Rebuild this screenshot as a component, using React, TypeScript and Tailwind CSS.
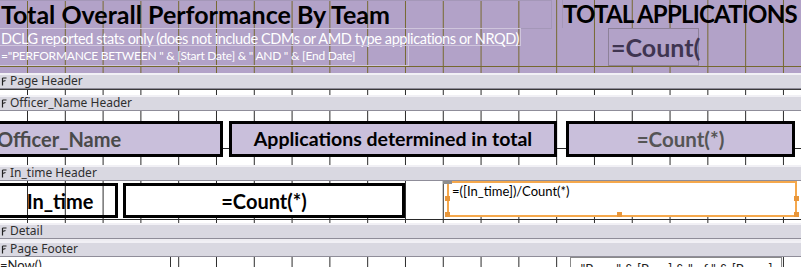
import type { ReactNode } from "react";

function BandIcon() {
  return (
    <svg width="6" height="9" viewBox="0 0 6 9" className="shrink-0">
      <path d="M1.5 1 H5.5 M1.5 1 V8.5 M1.5 4.5 L4.5 3.5" stroke="#222" strokeWidth="1.2" fill="none" />
    </svg>
  );
}

function Band({ label }: { label: string }) {
  return (
    <div className="flex h-4 shrink-0 items-center gap-[3px] border-t-2 border-b border-t-[#f1f0f5] border-b-[#8f8d99] bg-[#d9d8e1] pl-px font-['Noto_Sans',sans-serif] text-[12px] leading-none text-[#2f2f2f]">
      <BandIcon />
      <span className="-mt-px">{label}</span>
    </div>
  );
}

// designer canvas: 1cm grid (37.8px) drawn as background, horizontal rule as an overlay line
function Section({ className, rule, children }: { className: string; rule?: string; children?: ReactNode }) {
  return (
    <div className={`relative shrink-0 overflow-hidden bg-[length:37.8px_100%] bg-[position:27px_0] ${className}`}>
      {rule ? <div className={`absolute right-0 left-0 h-px ${rule}`} /> : null}
      <div className="relative flex items-start">{children}</div>
    </div>
  );
}

function Handle({ className }: { className: string }) {
  return <div className={`absolute h-[5px] w-[5px] bg-[#e8963a] ${className}`} />;
}

export default function App() {
  return (
    <div className="flex h-[267px] w-[801px] flex-col overflow-hidden bg-white font-['Lato',sans-serif]">
      {/* Report header */}
      <Section
        className="h-[73px] bg-[#b2a2c8] bg-[linear-gradient(to_right,#76692f_1px,transparent_1px)]"
        rule="top-[66px] bg-[#76692f]"
      >
        <div className="-ml-[2px] flex w-[564px] shrink-0 flex-col items-start">
          <div className="h-[29px] w-[554px] border border-[#a497b8] pl-[2px] text-[25px] leading-[27px] font-bold text-black">
            Total Overall Performance By Team
          </div>
          <div className="-mt-px h-[18px] w-[523px] border border-[#cfc5dc] pl-[2px] text-[14.5px] leading-[19px] tracking-[-0.4px] whitespace-nowrap text-white">
            DCLG reported stats only (does not include CDMs or AMD type applications or NRQD)
          </div>
          <div className="-mt-px h-[21px] w-[411px] border border-[#cfc5dc] pl-[2px] text-[12px] leading-[19px] tracking-[-0.25px] whitespace-nowrap text-white">
            =&quot;PERFORMANCE BETWEEN &quot; &amp; [Start Date] &amp; &quot; AND &quot; &amp; [End Date]
          </div>
        </div>
        <div className="flex flex-col items-start">
          <div className="h-[28px] border-l border-[#a497b8] text-[24px] leading-[27px] font-bold tracking-[-0.8px] whitespace-nowrap text-black">
            TOTAL APPLICATIONS
          </div>
          <div className="ml-[46px] h-[38px] w-[91px] border border-[#8d8199] bg-[#b2a2c8] pl-[2px] text-[25px] leading-[36px] font-bold text-[#3f3551]">
            =Count(
          </div>
        </div>
      </Section>

      <Band label="Page Header" />
      <Section className="h-[6px] border-t border-[#3a3a3a] bg-white bg-[linear-gradient(to_right,#2a2a2a_1px,transparent_1px)]" />

      <Band label="Officer_Name Header" />
      <Section
        className="h-[54px] bg-white bg-[linear-gradient(to_right,#2a2a2a_1px,transparent_1px)]"
        rule="top-[37px] bg-[#2a2a2a]"
      >
        <div className="mt-[10px] -ml-[4px] flex h-[36px] w-[227px] items-center border-[3px] border-black bg-[#c9bfdb] text-[20px] font-bold text-[#4a4a4a]">
          <span className="-ml-[2px]">Officer_Name</span>
        </div>
        <div className="mt-[10px] ml-[6px] flex h-[36px] w-[328px] items-center justify-center border-[3px] border-black bg-[#c9bfdb] text-[19.5px] font-bold text-black">
          Applications determined in total
        </div>
        <div className="mt-[10px] ml-[9px] flex h-[36px] w-[229px] items-center justify-center border-[3px] border-black bg-[#c9bfdb] text-[20.5px] font-bold text-[#555]">
          =Count(*)
        </div>
      </Section>

      <Band label="In_time Header" />
      <Section
        className="h-[42px] bg-white bg-[linear-gradient(to_right,#2a2a2a_1px,transparent_1px)]"
        rule="top-[38px] bg-[#2a2a2a]"
      >
        <div className="mt-[2px] -ml-[4px] flex h-[35px] w-[122px] items-center justify-center border-[3px] border-black pl-[6px] text-[20px] font-bold text-black">
          In_time
        </div>
        <div className="mt-[2px] ml-[5px] flex h-[35px] w-[282px] items-center justify-center border-[3px] border-black bg-white text-[20px] font-bold text-black">
          =Count(*)
        </div>
        <div className="relative ml-[42px] h-[36px] w-[350px] border-2 border-[#f5a84c] bg-white pl-[3px] text-[13px] leading-[17px] text-black">
          =([In_time])/Count(*)
          <div className="absolute -top-[2px] -left-[6px] h-[3px] w-[9px] bg-[#8e8e8e]" />
          <Handle className="top-[13px] -left-[4px]" />
          <Handle className="top-[29px] -left-[4px]" />
          <Handle className="top-[29px] left-[168px]" />
          <Handle className="top-[13px] -right-[4px]" />
          <Handle className="top-[29px] -right-[4px]" />
        </div>
      </Section>

      <Band label="Detail" />
      <Section className="h-[2px] bg-[#eeedf2]" />

      <Band label="Page Footer" />
      <Section className="flex-1 bg-white bg-[linear-gradient(to_right,#2a2a2a_1px,transparent_1px)]">
        <div className="h-[20px] w-[171px] shrink-0 border-r border-[#333] bg-white text-[13px] leading-[16px] text-[#222]">
          =Now()
        </div>
        <div className="ml-[399px] h-[20px] w-[212px] shrink-0 border border-[#8a8a8a] bg-white pt-[3px] pl-[2px] text-[13px] leading-[16px] whitespace-nowrap text-[#222]">
          =&quot;Page &quot; &amp; [Page] &amp; &quot; of &quot; &amp; [Pages]
        </div>
      </Section>
    </div>
  );
}
